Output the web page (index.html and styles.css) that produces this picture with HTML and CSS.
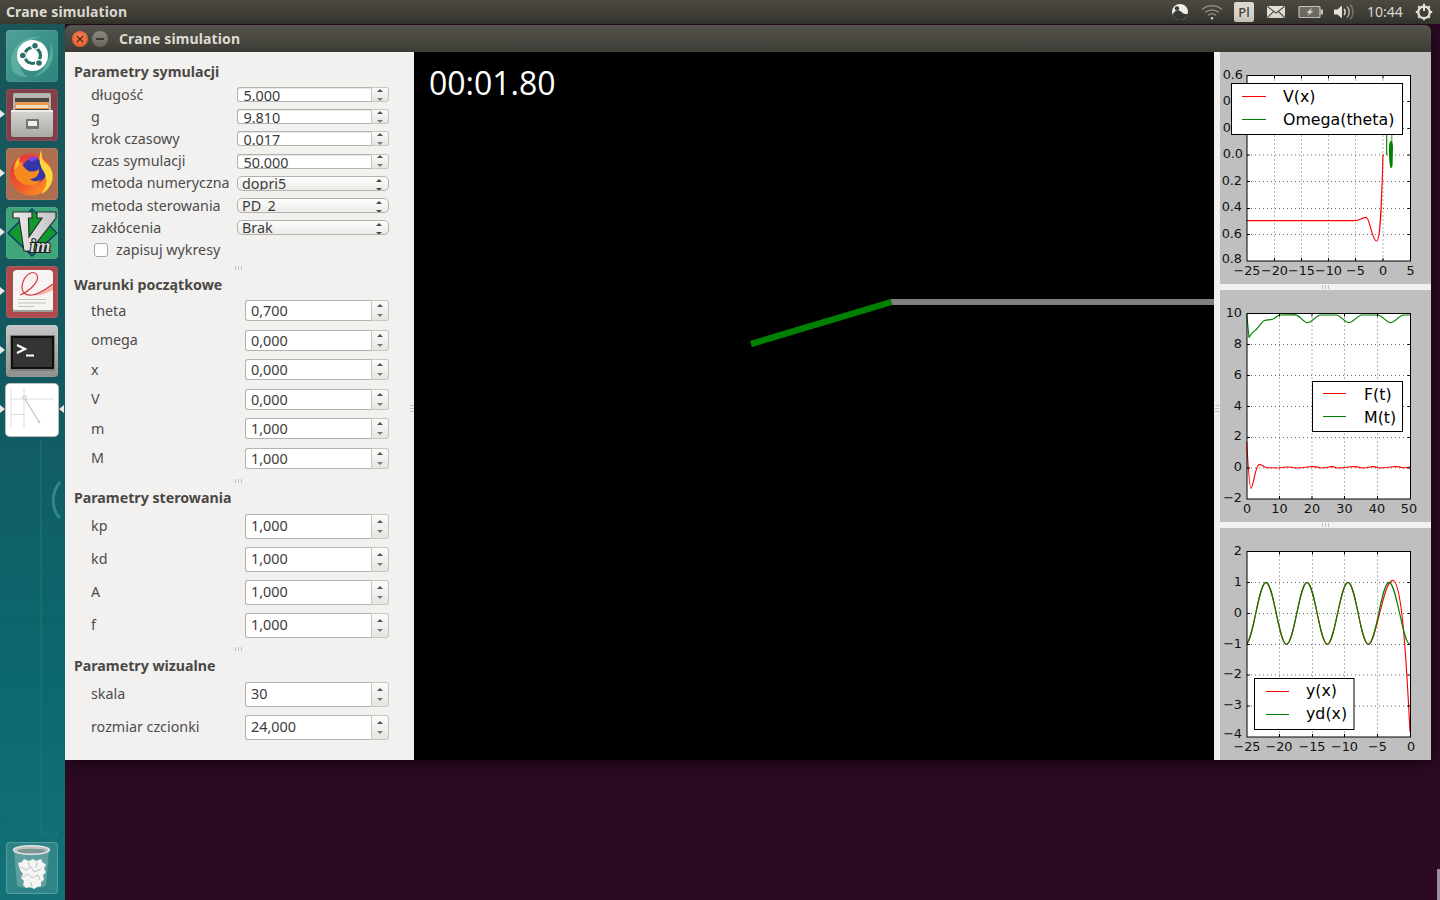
FILE: index.html
```html
<!DOCTYPE html>
<html lang="pl">
<head>
<meta charset="utf-8">
<title>Crane simulation</title>
<link rel="stylesheet" href="styles.css">
</head>
<body>
<div class="desktop">
  <header class="topbar">
    <div class="app-name">Crane simulation</div>
    <div class="tray">
      <div class="tray-item w32"><svg width="20" height="20" viewBox="0 0 20 20"><circle cx="10" cy="10" r="8" fill="#f2f0ea"/><path d="M2.500 12.500C5 8 9 7.500 12 10.500c1.500 1.500 4 2 6 1-1 4-4.500 6.500-8 6.500-3.500 0-6.500-2-7.500-5.500z" fill="#3c3b36"/><circle cx="7" cy="6.500" r="2.200" fill="#3c3b36"/></svg></div>
      <div class="tray-item w32"><svg width="22" height="18" viewBox="0 0 22 18" fill="none" stroke="#8d8b84" stroke-width="1.500"><path d="M1 6.500c5.500-5 14.500-5 20 0"/><path d="M4 9.500c4-3.500 10-3.500 14 0"/><path d="M7 12.300c2.500-2 5.500-2 8 0"/><circle cx="11" cy="15.300" r="1.200" fill="#e8e5dd" stroke="none"/></svg></div>
      <div class="tray-item w32"><span class="lang">Pl</span></div>
      <div class="tray-item w32"><svg width="20" height="14" viewBox="0 0 20 14"><rect x="1" y="1" width="18" height="12" rx="1" fill="#e4e1d9"/><path d="M1.500 1.500L10 8l8.500-6.500M1.500 12.500L7.500 6.500M18.500 12.500l-6-6" stroke="#55534c" fill="none" stroke-width="1.100"/></svg></div>
      <div class="tray-item w38"><svg width="26" height="14" viewBox="0 0 26 14"><rect x="1" y="1.500" width="21" height="11" rx="1" fill="#6e6c65" stroke="#c8c5bc" stroke-width="1.200"/><rect x="22.500" y="4.500" width="2.500" height="5" fill="#c8c5bc"/><path d="M14 3L8.500 7.800h3L9 11l6.500-4.800h-3z" fill="#e0ddd5"/></svg></div>
      <div class="tray-item w28"><svg width="22" height="18" viewBox="0 0 22 18"><path d="M1 6.500h3.500L9 2.500v13l-4.500-4H1z" fill="#e8e5dd"/><path d="M11 6c1.500 1.500 1.500 4.500 0 6" stroke="#e8e5dd" fill="none" stroke-width="1.500"/><path d="M14 3.500c3 3 3 8 0 11" stroke="#b5b2aa" fill="none" stroke-width="1.500"/><path d="M17 1.500c4 4 4 11 0 15" stroke="#77756e" fill="none" stroke-width="1.500"/></svg></div>
      <div class="tray-item clock">10:44</div>
      <div class="tray-item w24"><svg width="18" height="18" viewBox="0 0 18 18"><path d="M9 3.500a5.800 5.800 0 1 0 .01 0" fill="none" stroke="#e8e5dd" stroke-width="2.200"/><path d="M9 1v7" stroke="#e8e5dd" stroke-width="2"/><path d="M9 .8v2M9 15.200v2M.8 9h2M15.200 9h2M3.200 3.200l1.400 1.400M13.400 13.400l1.400 1.400M3.200 14.800l1.400-1.400M13.400 4.600l1.400-1.400" stroke="#e8e5dd" stroke-width="2"/></svg></div>
    </div>
  </header>

  <div class="workspace">
    <nav class="launcher">
      <svg class="launcher-art" width="65" height="876" viewBox="0 0 65 876" fill="none">
        <path d="M41 416V810H58M52 805l6 5-6 5" stroke="#1f7a6e" stroke-width="1"/>
        <path d="M60 458c-9 10-9 27 0 36" stroke="#2f8787" stroke-width="3"/>
        <path d="M0 790l50 80M0 130h65M0 360h65" stroke="#186366" stroke-width="1"/>
      </svg>
      <div class="tile tile-dash">
        <svg width="52" height="52" viewBox="0 0 52 52"><path d="M7 41C0 23 15 4 35 7 22 9 11 19 13 33c1 6 4 11 9 14-6 0-12-1-15-6zM45 13c6 15-2 31-18 34 10-5 18-16 18-34z" fill="#6fbcb0" opacity=".6"/><circle cx="26.500" cy="25.500" r="15.500" fill="#fff"/><circle cx="26.500" cy="25.500" r="8" fill="none" stroke="#2a6f69" stroke-width="3.200"/><circle cx="29" cy="15.800" r="3.400" fill="#2a6f69" stroke="#fff" stroke-width="1.300"/><circle cx="16.800" cy="25.500" r="3.400" fill="#2a6f69" stroke="#fff" stroke-width="1.300"/><circle cx="33" cy="33" r="3.400" fill="#2a6f69" stroke="#fff" stroke-width="1.300"/></svg>
      </div>
      <div class="tile tile-files pip">
        <svg width="52" height="52" viewBox="0 0 52 52"><defs><linearGradient id="cab" x1="0" y1="0" x2="0" y2="1"><stop offset="0" stop-color="#d6d6d2"/><stop offset="1" stop-color="#a9a9a5"/></linearGradient></defs><rect x="7" y="4" width="38" height="20" rx="2" fill="#b4b4b0"/><rect x="9" y="9" width="34" height="13" fill="#4a4845"/><rect x="9" y="13" width="34" height="7" fill="#e79a4e"/><rect x="10" y="16" width="32" height="3" fill="#f5dcb4"/><path d="M5 21h42v25a2 2 0 0 1-2 2H7a2 2 0 0 1-2-2z" fill="url(#cab)"/><rect x="5" y="21" width="42" height="2" fill="#ededea"/><rect x="20" y="30" width="13" height="10" rx="1" fill="#757570"/><rect x="22" y="32" width="9" height="5" fill="#eeeeea"/></svg>
      </div>
      <div class="tile tile-firefox pip">
        <svg width="52" height="52" viewBox="0 0 52 52"><defs><linearGradient id="fox" x1="0" y1="0" x2="1" y2="1"><stop offset="0" stop-color="#e62a3a"/><stop offset=".6" stop-color="#f4632b"/><stop offset="1" stop-color="#ffa820"/></linearGradient></defs><circle cx="25" cy="26.500" r="21" fill="url(#fox)"/><circle cx="28" cy="23" r="12.500" fill="#3436a6"/><path d="M22 10c3-2 8-2 11 0-3 1-4 3-8 4z" fill="#7a45d8"/><path d="M8 24c1-5 5-8 8-11 0 3 1 6 4 8 3 3 6 3 9 2 2 0 4-2 4-2 1 6-4 10-9 10 3 3 8 3 11 0-2 5-8 7-13 6-8-1-13-6-14-13z" fill="#f78a1f"/><path d="M35 2c1 5 0 8 3 11 8 6 11 15 7 23-2 4-5 8-10 10 6-6 7-15 3-22-4-6-6-12-3-22z" fill="#ffd93a"/><path d="M14 9c-1 3-1 5 0 7l-6 6c0-5 2-10 6-13z" fill="#f7c02c"/></svg>
      </div>
      <div class="tile tile-vim pip">
        <svg width="52" height="52" viewBox="0 0 52 52"><defs><linearGradient id="vee" x1="0" y1="0" x2="1" y2="0"><stop offset="0" stop-color="#ececec"/><stop offset="1" stop-color="#c4c4c4"/></linearGradient></defs><path d="M26 2l25 24-25 23L2 26z" fill="#119b2f" stroke="#123a78" stroke-width="1.500"/><path d="M7 5H26V11H22.500L23 30L36 11H31V5H50V11L24 44H18L13 11H7Z" fill="url(#vee)" stroke="#2c2c2c" stroke-width="1.200"/><text x="24" y="45" class="vim-text">im</text></svg>
      </div>
      <div class="tile tile-writer pip">
        <svg width="52" height="52" viewBox="0 0 52 52"><rect x="7" y="4" width="40" height="42" rx="4" fill="#f5f4f2"/><rect x="7" y="44" width="40" height="2" fill="#a09e9b"/><path d="M26 29c8-1 14-6 21-10v5c-7 3-14 7-21 5z" fill="#f4b4b0"/><path d="M14 29C24 25 34 15 31 9C28 4 20 7 17 16C14 24 18 30 26 29C34 28 40 23 47 18" fill="none" stroke="#da3a40" stroke-width="1.200"/><path d="M12 33.500h28M12 37h28M12 40.500h16" stroke="#c4c3c0" stroke-width="1"/></svg>
      </div>
      <div class="tile tile-term pip">
        <svg width="52" height="52" viewBox="0 0 52 52"><rect x="4" y="10" width="45" height="36" fill="#7c7e7c"/><rect x="5" y="11" width="43" height="33" fill="#0e0e0e"/><rect x="7" y="13" width="39" height="29" fill="#343432"/><path d="M11 20l8 4-8 4" fill="none" stroke="#fff" stroke-width="2.200"/><path d="M20 30.500h8" stroke="#fff" stroke-width="1.800"/></svg>
      </div>
      <div class="tile tile-plot pip pip-active">
        <svg width="52" height="52" viewBox="0 0 52 52" fill="none"><rect width="52" height="52" fill="#fff"/><path d="M5 15h43M18 4v40M5 30.500h13M5 5v38" stroke="#dedede" stroke-width="1"/><path d="M19 15L33 38" stroke="#bdbdbd" stroke-width="1.100"/><circle cx="18.500" cy="13.500" r="1.800" stroke="#c8c8c8"/><circle cx="33" cy="38" r="1.400" fill="#d0d0d0"/></svg>
      </div>
      <div class="tile tile-trash">
        <svg width="52" height="52" viewBox="0 0 52 52"><path d="M8 8l3 35c1 4 28 4 29 0l3-35z" fill="#a5c8c6" opacity=".4"/><path d="M12 21l4-1 2-3 5 2 4-2 3 2 5-2 2 4 3 1-2 5 2 3-3 3 1 5-3 2 0 4-4 1-3 2-4-2-4 1-3-3 1-4-3-3 2-4-3-4z" fill="#f4f4f2"/><path d="M14 25l6 3 5-3 3 5 7-3M17 35l5-3 4 4 6-3 2 5M22 20l2 5M31 20l-1 6M25 40l1 5" stroke="#bcc5c3" fill="none"/><ellipse cx="25.500" cy="8" rx="18" ry="4.200" fill="#bac2c0" stroke="#e0e4e2" stroke-width="1.500"/><ellipse cx="25.500" cy="9" rx="14" ry="2.300" fill="#7d9593"/></svg>
      </div>
    </nav>

    <section class="window">
      <div class="titlebar">
        <div class="win-btn win-close"><svg width="8" height="8" viewBox="0 0 8 8"><path d="M1 1l6 6M7 1L1 7" stroke="#5a1f0c" stroke-width="1.300"/></svg></div>
        <div class="win-btn win-min"><span class="min-bar"></span></div>
        <div class="win-title">Crane simulation</div>
      </div>
      <div class="win-body">
        <aside class="panel">
          <section class="group g-tight">
            <h2 class="group-title">Parametry symulacji</h2>
            <div class="row"><span class="label">długość</span><div class="spin"><div class="field">5.000</div><div class="spin-btn"><i class="up"></i><i class="down"></i></div></div></div>
            <div class="row"><span class="label">g</span><div class="spin"><div class="field">9.810</div><div class="spin-btn"><i class="up"></i><i class="down"></i></div></div></div>
            <div class="row"><span class="label">krok czasowy</span><div class="spin"><div class="field">0.017</div><div class="spin-btn"><i class="up"></i><i class="down"></i></div></div></div>
            <div class="row"><span class="label">czas symulacji</span><div class="spin"><div class="field">50.000</div><div class="spin-btn"><i class="up"></i><i class="down"></i></div></div></div>
            <div class="row"><span class="label">metoda numeryczna</span><div class="combo"><span class="combo-text">dopri5</span><span class="combo-arrows"><i class="up"></i><i class="down"></i></span></div></div>
            <div class="row"><span class="label">metoda sterowania</span><div class="combo"><span class="combo-text">PD_2</span><span class="combo-arrows"><i class="up"></i><i class="down"></i></span></div></div>
            <div class="row"><span class="label">zakłócenia</span><div class="combo"><span class="combo-text">Brak</span><span class="combo-arrows"><i class="up"></i><i class="down"></i></span></div></div>
            <label class="check-row"><span class="check"></span><span class="label">zapisuj wykresy</span></label>
          </section>
          <div class="grip-h g1"><span class="dots"></span></div>
          <section class="group g-mid">
            <h2 class="group-title">Warunki początkowe</h2>
            <div class="row"><span class="label">theta</span><div class="spin"><div class="field">0,700</div><div class="spin-btn"><i class="up"></i><i class="down"></i></div></div></div>
            <div class="row"><span class="label">omega</span><div class="spin"><div class="field">0,000</div><div class="spin-btn"><i class="up"></i><i class="down"></i></div></div></div>
            <div class="row"><span class="label">x</span><div class="spin"><div class="field">0,000</div><div class="spin-btn"><i class="up"></i><i class="down"></i></div></div></div>
            <div class="row"><span class="label">V</span><div class="spin"><div class="field">0,000</div><div class="spin-btn"><i class="up"></i><i class="down"></i></div></div></div>
            <div class="row"><span class="label">m</span><div class="spin"><div class="field">1,000</div><div class="spin-btn"><i class="up"></i><i class="down"></i></div></div></div>
            <div class="row"><span class="label">M</span><div class="spin"><div class="field">1,000</div><div class="spin-btn"><i class="up"></i><i class="down"></i></div></div></div>
          </section>
          <div class="grip-h g2"><span class="dots"></span></div>
          <section class="group g-wide">
            <h2 class="group-title">Parametry sterowania</h2>
            <div class="row"><span class="label">kp</span><div class="spin"><div class="field">1,000</div><div class="spin-btn"><i class="up"></i><i class="down"></i></div></div></div>
            <div class="row"><span class="label">kd</span><div class="spin"><div class="field">1,000</div><div class="spin-btn"><i class="up"></i><i class="down"></i></div></div></div>
            <div class="row"><span class="label">A</span><div class="spin"><div class="field">1,000</div><div class="spin-btn"><i class="up"></i><i class="down"></i></div></div></div>
            <div class="row"><span class="label">f</span><div class="spin"><div class="field">1,000</div><div class="spin-btn"><i class="up"></i><i class="down"></i></div></div></div>
          </section>
          <div class="grip-h g3"><span class="dots"></span></div>
          <section class="group g-wide">
            <h2 class="group-title">Parametry wizualne</h2>
            <div class="row"><span class="label">skala</span><div class="spin"><div class="field">30</div><div class="spin-btn"><i class="up"></i><i class="down"></i></div></div></div>
            <div class="row"><span class="label">rozmiar czcionki</span><div class="spin"><div class="field">24,000</div><div class="spin-btn"><i class="up"></i><i class="down"></i></div></div></div>
          </section>
        </aside>

        <main class="stage">
          <div class="grip-v grip-v-left"></div>
          <div class="timer">00:01.80</div>
          <svg class="crane" width="800" height="708" viewBox="414 52 800 708">
            <rect x="891" y="299" width="323" height="6" fill="#808080"/>
            <path d="M891.500 302L751 344" stroke="#008000" stroke-width="6.500"/>
          </svg>
        </main>

        <aside class="plots">
          <div class="plot p1">
            <svg width="211" height="232" viewBox="1220 52 211 232">
              <rect x="1247" y="75.500" width="163.500" height="185.500" fill="#fff"/>
              <path class="grid" d="M1274.500 75.500V261M1301.500 75.500V261M1328.500 75.500V261M1355.500 75.500V261M1383 75.500V261M1247 101.500H1410.500M1247 128.500H1410.500M1247 155H1410.500M1247 181.500H1410.500M1247 208.500H1410.500M1247 234.500H1410.500"/>
              <g transform="translate(1160 0) scale(.33333)">
                <path class="c-red" d="M260 662L585 662C600 662 605 652 618 652C630 652 635 723 650 723C662 723 665 600 669 463"/>
                <path class="c-green" d="M680 403V465"/>
                <path class="c-green pale" d="M695 403V430"/>
                <path class="blob" d="M690 425C695 420 698 425 699 440L698 490C698 500 695 506 692 504C690 500 687 480 687 460C687 445 687 430 690 425Z"/>
              </g>
              <rect class="frame" x="1247" y="75.500" width="163.500" height="185.500"/>
              <path class="ticks" d="M1274.500 75.500v3M1301.500 75.500v3M1328.500 75.500v3M1355.500 75.500v3M1383 75.500v3M1274.500 261v-3M1301.500 261v-3M1328.500 261v-3M1355.500 261v-3M1383 261v-3M1247 101.500h3M1247 128.500h3M1247 155h3M1247 181.500h3M1247 208.500h3M1247 234.500h3M1410.500 101.500h-3M1410.500 128.500h-3M1410.500 155h-3M1410.500 181.500h-3M1410.500 208.500h-3M1410.500 234.500h-3"/>
              <g class="tick-y">
                <text x="1243" y="79">0.6</text><text x="1243" y="105">0.4</text><text x="1243" y="132">0.2</text><text x="1243" y="158">0.0</text><text x="1242" y="185">0.2</text><text x="1242" y="211">0.4</text><text x="1242" y="238">0.6</text><text x="1242" y="263">0.8</text>
              </g>
              <g class="tick-x">
                <text x="1247" y="275">−25</text><text x="1274.500" y="275">−20</text><text x="1301.500" y="275">−15</text><text x="1328.500" y="275">−10</text><text x="1355.500" y="275">−5</text><text x="1383" y="275">0</text><text x="1410.500" y="275">5</text>
              </g>
              <rect class="legend" x="1231.500" y="83.500" width="171" height="51"/>
              <path class="leg-red" d="M1242 96.500h24"/><path class="leg-green" d="M1242 119.500h24"/>
              <text class="legend-text" x="1283" y="102">V(x)</text><text class="legend-text" x="1283" y="125">Omega(theta)</text>
            </svg>
          </div>
          <div class="grip-h short"><span class="dots"></span></div>
          <div class="plot p2">
            <svg width="211" height="232" viewBox="1220 290 211 232">
              <rect x="1247" y="313.500" width="163.500" height="185.500" fill="#fff"/>
              <path class="grid" d="M1279.500 313.500V499M1312 313.500V499M1344.500 313.500V499M1377.500 313.500V499M1247 344.500H1410.500M1247 375.500H1410.500M1247 406.500H1410.500M1247 437.500H1410.500M1247 468H1410.500"/>
              <g transform="translate(1210 285) scale(.33333)">
                <path class="c-red" d="M110 470C114 540 118 610 123 610C130 610 135 540 148 538C156 538 160 547 170 548L208 549Q220 546 232 546T256 549Q274 549 293 546T332 549Q344 549 356 546T380 549Q398 549 417 546T456 549Q468 549 480 546T505 549Q523 549 542 546T581 549L601 546"/>
                <path class="c-green" d="M110 86L117 157C122 150 125 143 133 139C142 134 148 118 162 107C172 103 180 106 190 102C198 97 202 91 210 90C225 89 240 90 255 89C270 91 280 113 293 113C306 113 318 91 332 90L378 90C392 91 404 113 417 113C430 113 442 91 456 90L503 90C517 91 529 113 542 113C555 113 567 91 581 90L601 90"/>
              </g>
              <rect class="frame" x="1247" y="313.500" width="163.500" height="185.500"/>
              <path class="ticks" d="M1279.500 313.500v3M1312 313.500v3M1344.500 313.500v3M1377.500 313.500v3M1279.500 499v-3M1312 499v-3M1344.500 499v-3M1377.500 499v-3M1247 344.500h3M1247 375.500h3M1247 406.500h3M1247 437.500h3M1247 468h3M1410.500 344.500h-3M1410.500 375.500h-3M1410.500 406.500h-3M1410.500 437.500h-3M1410.500 468h-3"/>
              <g class="tick-y">
                <text x="1242" y="317">10</text><text x="1242" y="348">8</text><text x="1242" y="379">6</text><text x="1242" y="410">4</text><text x="1242" y="440">2</text><text x="1242" y="471">0</text><text x="1242" y="502">−2</text>
              </g>
              <g class="tick-x">
                <text x="1247" y="512.500">0</text><text x="1279.500" y="512.500">10</text><text x="1312" y="512.500">20</text><text x="1344.500" y="512.500">30</text><text x="1377" y="512.500">40</text><text x="1409" y="512.500">50</text>
              </g>
              <rect class="legend" x="1312.500" y="381.500" width="90" height="50"/>
              <path class="leg-red" d="M1323 393.500h23"/><path class="leg-green" d="M1323 416.500h23"/>
              <text class="legend-text" x="1364" y="400">F(t)</text><text class="legend-text" x="1364" y="423">M(t)</text>
            </svg>
          </div>
          <div class="grip-h short"><span class="dots"></span></div>
          <div class="plot p3">
            <svg width="211" height="232" viewBox="1220 528 211 232">
              <defs><clipPath id="axes3"><rect x="1247" y="551.500" width="163.500" height="185.500"/></clipPath></defs>
              <rect x="1247" y="551.500" width="163.500" height="185.500" fill="#fff"/>
              <path class="grid" d="M1279.500 551.500V737M1312.500 551.500V737M1344.500 551.500V737M1377.500 551.500V737M1247 582.500H1410.500M1247 613.500H1410.500M1247 644.500H1410.500M1247 675H1410.500M1247 706H1410.500"/>
              <g clip-path="url(#axes3)"><g transform="translate(1210 520) scale(.33333)">
                <path class="c-red" d="M106.500 373C129 373 145.500 187 168 187S207 373 229.500 373S268.600 187 291 187S329.600 373 352 373S391 187 414 187S452 373 475 373C498 373 520 181 548 181C575 181 588 400 600 635"/>
                <path class="c-green" d="M106.500 373C129 373 145.500 187 168 187S207 373 229.500 373S268.600 187 291 187S329.600 373 352 373S391 187 414 187S452 373 475 373S514 187 537 187S578 373 600 373"/>
              </g></g>
              <rect class="frame" x="1247" y="551.500" width="163.500" height="185.500"/>
              <path class="ticks" d="M1279.500 551.500v3M1312.500 551.500v3M1344.500 551.500v3M1377.500 551.500v3M1279.500 737v-3M1312.500 737v-3M1344.500 737v-3M1377.500 737v-3M1247 582.500h3M1247 613.500h3M1247 644.500h3M1247 675h3M1247 706h3M1410.500 582.500h-3M1410.500 613.500h-3M1410.500 644.500h-3M1410.500 675h-3M1410.500 706h-3"/>
              <g class="tick-y">
                <text x="1242" y="555">2</text><text x="1242" y="586">1</text><text x="1242" y="617">0</text><text x="1242" y="648">−1</text><text x="1242" y="678">−2</text><text x="1242" y="709">−3</text><text x="1242" y="738">−4</text>
              </g>
              <g class="tick-x">
                <text x="1247" y="751">−25</text><text x="1279" y="751">−20</text><text x="1312" y="751">−15</text><text x="1344.500" y="751">−10</text><text x="1377.500" y="751">−5</text><text x="1411" y="751">0</text>
              </g>
              <rect class="legend" x="1254.500" y="678.500" width="99.500" height="51"/>
              <path class="leg-red" d="M1266 691.500h23"/><path class="leg-green" d="M1266 714.500h23"/>
              <text class="legend-text" x="1306" y="696">y(x)</text><text class="legend-text" x="1306" y="719">yd(x)</text>
            </svg>
          </div>
        </aside>
      </div>
    </section>
  </div>
  <div class="edge-sliver"></div>
</div>
</body>
</html>
```
FILE: styles.css
```css
* { box-sizing: border-box; }
html, body { margin: 0; height: 100%; }
body {
  width: 1440px;
  height: 900px;
  overflow: hidden;
  background: #2c0a24;
  font-family: "Noto Sans", "Open Sans", sans-serif;
  font-size: 14.300px;
  color: #4c4c4c;
}
.desktop { position: relative; display: flex; flex-direction: column; width: 1440px; height: 900px; }

.topbar {
  display: flex;
  align-items: center;
  justify-content: space-between;
  height: 24px;
  flex: none;
  background: linear-gradient(#4a4840, #3b3a33);
  color: #dfdbd2;
}
.app-name { padding: 0 0 2px 6px; font-weight: 700; font-size: 14px; letter-spacing: .13px; }
.tray { display: flex; align-items: center; height: 24px; padding-right: 4px; }
.tray-item { display: flex; align-items: center; justify-content: center; height: 24px; }
.w32 { width: 32px; }
.w38 { width: 38px; }
.w28 { width: 28px; }
.w24 { width: 24px; }
.clock { width: 54px; padding-bottom: 1px; font-size: 14px; color: #dfdbd2; }
.lang {
  display: flex; align-items: center; justify-content: center;
  width: 20px; height: 20px;
  border-radius: 2px;
  background: #dcd8cf;
  color: #45433d;
  font-size: 13px;
  font-weight: 500;
}

.workspace { display: flex; flex: 1; min-height: 0; }

.launcher {
  position: relative;
  display: flex;
  flex-direction: column;
  gap: 7px;
  flex: none;
  width: 65px;
  padding: 6px 0;
  background: linear-gradient(#1a5558 0%, #12595f 40%, #0c686f 75%, #127278 100%);
}
.launcher-art { position: absolute; left: 0; top: 0; }
.tile {
  position: relative;
  width: 52px;
  height: 52px;
  margin-left: 6px;
  border-radius: 4px;
  overflow: visible;
  box-shadow: inset 0 0 0 1px rgba(255, 255, 255, .08);
}
.tile svg { display: block; border-radius: 4px; }
.tile-dash { background: linear-gradient(135deg, #4fa297, #2a8279); }
.tile-files { background: #7e4049; }
.tile-firefox { background: #ad6f50; }
.tile-vim { background: #3fa57a; }
.tile-writer { background: #ac4b4d; }
.tile-term { background: linear-gradient(#c5c8c6, #8d908e); }
.tile-plot { background: #fff; box-shadow: 0 0 0 1px #b9bebd; }
.tile-trash { margin-top: auto; background: rgba(120, 180, 175, .3); box-shadow: inset 0 0 0 1px rgba(255, 255, 255, .2); }
.pip::before {
  content: "";
  position: absolute;
  left: -6px;
  top: 21px;
  border-left: 5px solid #e8e8e8;
  border-top: 4px solid transparent;
  border-bottom: 4px solid transparent;
}
.pip-active::after {
  content: "";
  position: absolute;
  right: -6px;
  top: 21px;
  border-right: 5px solid #e8e8e8;
  border-top: 4px solid transparent;
  border-bottom: 4px solid transparent;
}
.vim-text {
  font-family: "Liberation Serif", serif;
  font-style: italic;
  font-weight: 700;
  font-size: 19px;
  letter-spacing: .5px;
  fill: #d8d8d8;
  stroke: #1c1c1c;
  stroke-width: 2.200px;
  paint-order: stroke;
}

.window {
  flex: none;
  display: flex;
  flex-direction: column;
  width: 1366px;
  height: 735px;
  margin-top: 1px;
  border-radius: 6px 6px 0 0;
  overflow: hidden;
  box-shadow: 0 3px 18px rgba(0, 0, 0, .55);
}
.titlebar {
  display: flex;
  align-items: center;
  flex: none;
  height: 27px;
  padding-left: 7px;
  background: linear-gradient(#56544c, #3c3b35);
}
.win-btn {
  display: flex; align-items: center; justify-content: center;
  width: 16px; height: 16px;
  border-radius: 50%;
  flex: none;
}
.win-close { background: radial-gradient(circle at 50% 40%, #f48a5c, #dd4a1f); }
.win-min { margin-left: 4px; background: linear-gradient(#8a887f, #66645c); }
.min-bar { width: 8px; height: 2px; background: #3a3832; }
.win-title { margin-left: 11px; font-weight: 700; color: #dfdbd2; font-size: 14px; letter-spacing: .13px; }

.win-body { display: flex; flex: 1; min-height: 0; background: #f2f1f0; }

.panel { flex: none; width: 349px; padding-top: 10px; color: #4c4c4c; }
.group { padding-left: 9px; }
.group-title { margin: 0; height: 20px; line-height: 20px; font-size: 14.200px; font-weight: 700; color: #4a4844; }
.row { display: grid; align-items: center; margin-left: 17px; }
.label { font-size: 14.300px; line-height: 18px; white-space: nowrap; }
.g-tight .group-title { margin-bottom: 1.500px; }
.g-tight .row { grid-template-columns: 146px 151.500px; height: 22.200px; }
.g-mid .group-title { margin-bottom: 1px; }
.g-mid .row { grid-template-columns: 154px 143.500px; height: 29.500px; }
.g-wide .group-title { margin-bottom: 1.500px; }
.g-wide .row { grid-template-columns: 154px 143.500px; height: 33px; }

.spin { display: flex; height: 21px; font-size: 14.400px; }
.g-tight .spin { height: 15px; }
.g-wide .spin { height: 25px; }
.field {
  flex: 1;
  padding-left: 5px;
  border: 1px solid #b5b2ac;
  border-right-color: #c8c6c1;
  border-radius: 3px 0 0 3px;
  background: #fff;
  color: #3c3c3c;
  line-height: 19px;
  overflow: hidden;
}
.g-wide .field { line-height: 21px; }
.g-tight .field { padding-left: 5.500px; line-height: 16px; box-shadow: inset 0 1px 0 #e8e6e3; }
.spin-btn {
  display: flex; flex-direction: column; align-items: center; justify-content: center; gap: 7px;
  flex: none;
  width: 16.500px;
  border: 1px solid #c8c6c1;
  border-left: 0;
  border-radius: 0 3px 3px 0;
  background: linear-gradient(#fbfbfa, #e7e5e2);
  overflow: hidden;
}
.g-tight .spin-btn { gap: 6px; }
i.up, i.down {
  display: block;
  flex: none;
  width: 0; height: 0;
  border-left: 3px solid transparent;
  border-right: 3px solid transparent;
}
i.up { border-bottom: 3px solid #55534e; }
i.down { border-top: 3px solid #7d7b76; }
.combo {
  display: flex; align-items: flex-start; justify-content: space-between;
  height: 14.500px;
  border: 1px solid #b5b2ac;
  border-radius: 5px;
  background: linear-gradient(#fdfdfd, #ecebe9);
  overflow: hidden;
  width: 152px;
}
.combo-text { padding-left: 4px; line-height: 14px; color: #3c3c3c; white-space: pre; font-size: 14.400px; }
.combo-arrows { display: flex; flex-direction: column; align-items: center; gap: 5.500px; margin: 2px 6px 0 0; }
.combo-arrows i.up { border-bottom-color: #4a4844; }
.combo-arrows i.down { border-top-color: #4a4844; }
.check-row { display: flex; align-items: center; height: 22.200px; margin-left: 20px; }
.check {
  width: 14px; height: 14px;
  margin-right: 8px;
  border: 1px solid #aaa8a3;
  border-radius: 3px;
  background: #fdfdfd;
}

.grip-h { display: flex; align-items: center; justify-content: center; }
.g1 { height: 14px; }
.g2 { height: 15px; }
.g3 { height: 14.500px; }
.dots {
  width: 8px; height: 4px;
  background: repeating-linear-gradient(90deg, #c4c2be 0 1px, transparent 1px 3px);
}
.panel .grip-h { padding-right: 2px; }
.short { height: 6px; flex: none; }

.stage { position: relative; flex: none; width: 800px; background: #000; }
.grip-v { position: absolute; top: 352px; width: 4px; height: 8px; background: repeating-linear-gradient(0deg, #c4c2be 0 1px, transparent 1px 3px); }
.grip-v-left { left: -4px; }
.timer { position: absolute; left: 15px; top: 9px; color: #fff; font-size: 32px; line-height: 44px; font-family: "Open Sans", sans-serif; }
.crane { display: block; }

.plots { position: relative; display: flex; flex-direction: column; flex: none; width: 217px; padding-left: 6px; }
.plots::before { content: ""; position: absolute; left: 1px; top: 352px; width: 4px; height: 8px; background: repeating-linear-gradient(0deg, #c4c2be 0 1px, transparent 1px 3px); }
.plot { flex: none; width: 211px; height: 232px; background: #bfbfbf; }
.plot svg { display: block; }
.grid { fill: none; stroke: #444; stroke-width: 1; stroke-dasharray: 1 3; opacity: .8; }
.frame { fill: none; stroke: #000; stroke-width: 1; }
.ticks { fill: none; stroke: #000; stroke-width: 1; }
.c-red { fill: none; stroke: #f00; stroke-width: 3.400; stroke-linejoin: round; }
.c-green { fill: none; stroke: #008000; stroke-width: 3.400; stroke-linejoin: round; }
.pale { opacity: .5; stroke-width: 5; }
.blob { fill: #008000; }
.leg-red { fill: none; stroke: #f00; stroke-width: 1; }
.leg-green { fill: none; stroke: #008000; stroke-width: 1; }
.legend { fill: #fff; stroke: #000; stroke-width: 1; }
.legend-text { font-family: "DejaVu Sans", sans-serif; font-size: 15.800px; fill: #000; }
.tick-y text, .tick-x text { font-family: "DejaVu Sans", sans-serif; font-size: 12.800px; fill: #111; }
.tick-y text { text-anchor: end; }
.tick-x text { text-anchor: middle; }

.edge-sliver { position: absolute; right: 0; bottom: 0; width: 3px; height: 31px; background: #9a8f99; }
```
